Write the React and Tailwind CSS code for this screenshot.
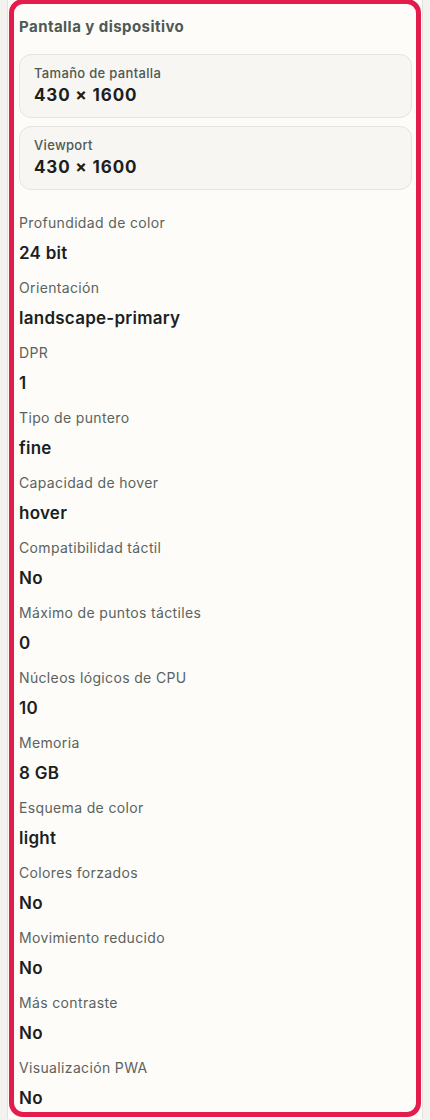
import React from "react";

const cards = [
  { label: "Tamaño de pantalla", value: "430 × 1600" },
  { label: "Viewport", value: "430 × 1600" },
];

const rows = [
  ["Profundidad de color", "24 bit"],
  ["Orientación", "landscape-primary"],
  ["DPR", "1"],
  ["Tipo de puntero", "fine"],
  ["Capacidad de hover", "hover"],
  ["Compatibilidad táctil", "No"],
  ["Máximo de puntos táctiles", "0"],
  ["Núcleos lógicos de CPU", "10"],
  ["Memoria", "8 GB"],
  ["Esquema de color", "light"],
  ["Colores forzados", "No"],
  ["Movimiento reducido", "No"],
  ["Más contraste", "No"],
  ["Visualización PWA", "No"],
];

const App = () => {
  return (
    <div
      className="h-[1120px] overflow-hidden bg-[#f3f2ee] px-[7px]"
      style={{ fontFamily: "Inter, 'Noto Sans', sans-serif" }}
    >
      <div className="border-x border-[#e3e2dc] bg-[#fdfcf9] px-[1px] pb-[2px]">
        <div className="-mt-[1px] rounded-[14px] border-[5px] border-[#e31c4b] bg-[#fdfcf9] pl-[5px] pr-[4px] pt-[13px] pb-[3px]">
          <h2 className="text-[15px] font-bold leading-[20px] tracking-[0.03em] text-[#4d5955]">
            Pantalla y dispositivo
          </h2>

          <div className="mt-[17px] flex flex-col gap-[8px]">
            {cards.map((c) => (
              <div
                key={c.label}
                className="h-[64px] rounded-[12px] border border-[#e5e4de] bg-[#f7f6f2] px-[14px] pt-[9px]"
              >
                <div className="text-[13px] font-medium leading-[18px] tracking-[0.025em] text-[#4f5955]">
                  {c.label}
                </div>
                <div className="mt-[2px] text-[17px] font-bold leading-[22px] tracking-[0.05em] text-[#1b1f1e]">
                  {c.value}
                </div>
              </div>
            ))}
          </div>

          <div className="mt-[23px] flex flex-col gap-[14px]">
            {rows.map(([label, value]) => (
              <div key={label}>
                <div className="text-[14px] leading-[20px] tracking-[0.025em] text-[#5a6360]">
                  {label}
                </div>
                <div className="mt-[9px] text-[17px] font-semibold leading-[22px] tracking-[0.015em] text-[#1b1f1e]">
                  {value}
                </div>
              </div>
            ))}
          </div>
        </div>
      </div>
    </div>
  );
};

export default App;
